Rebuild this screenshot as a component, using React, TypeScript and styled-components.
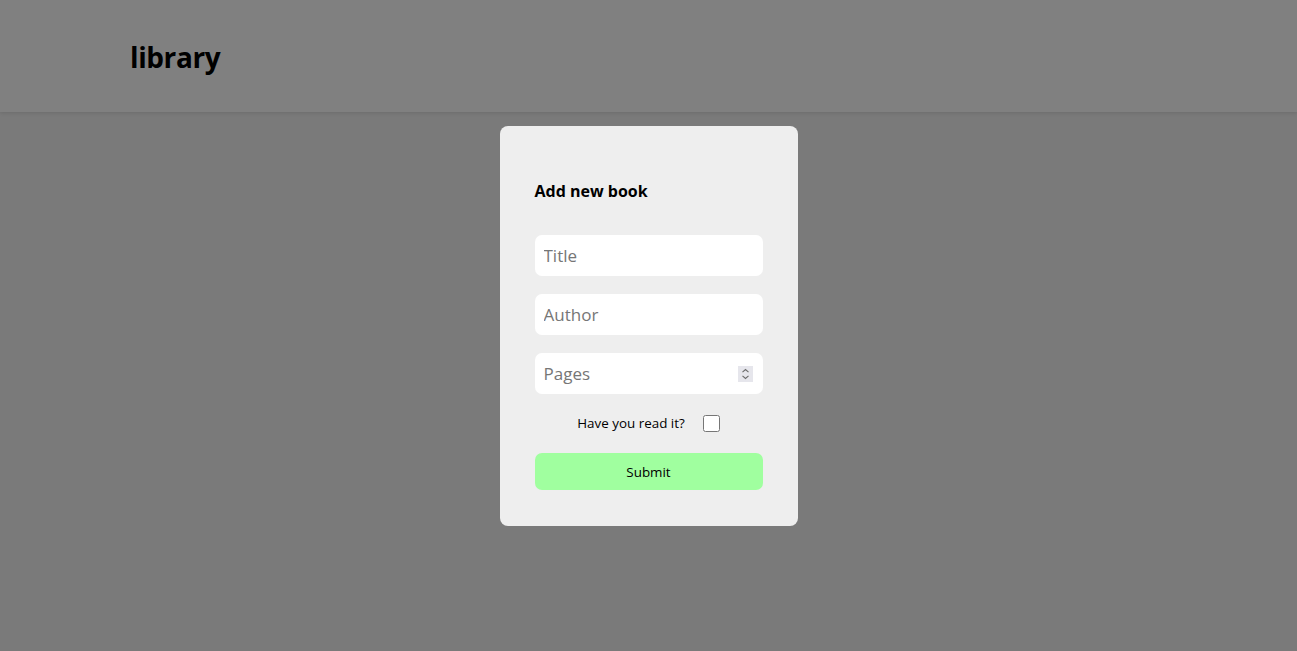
import React from "react";
import styled, { createGlobalStyle } from "styled-components";

const Global = createGlobalStyle`
  html, body { margin: 0; padding: 0; }
  body {
    background: #7a7a7a;
    font-family: "Open Sans", "Noto Sans", sans-serif;
    min-height: 651px;
  }
  * { box-sizing: border-box; }
`;

const Header = styled.header`
  height: 112px;
  background: #808080;
  box-shadow: 0 1px 4px rgba(0, 0, 0, 0.12);
  display: flex;
  align-items: center;
  padding-left: 130px;
  position: relative;
  z-index: 1;
`;

const Logo = styled.h1`
  margin: 0;
  font-size: 28px;
  font-weight: 700;
  color: #000;
  letter-spacing: -0.4px;
  padding-top: 2px;
`;

const Main = styled.main`
  display: flex;
  justify-content: center;
  padding-top: 14px;
`;

const Card = styled.form`
  width: 298px;
  height: 400px;
  background: #eeeeee;
  border-radius: 8px;
  padding: 53px 35px 0;
  display: flex;
  flex-direction: column;
`;

const Title = styled.h2`
  margin: 0 0 32px;
  font-size: 16px;
  font-weight: 700;
  color: #000;
  line-height: 24px;
`;

const FieldWrap = styled.div`
  position: relative;
  width: 228px;
  height: 41px;
  margin-bottom: 18px;
`;

const Field = styled.input`
  width: 100%;
  height: 100%;
  border: none;
  border-radius: 7px;
  background: #fff;
  padding: 0 9px;
  font-family: inherit;
  font-size: 17px;
  color: #000;
  outline: none;
  -moz-appearance: textfield;
  &::placeholder { color: #767676; }
  &::-webkit-inner-spin-button,
  &::-webkit-outer-spin-button { -webkit-appearance: none; margin: 0; }
`;

const Spinner = styled.span`
  position: absolute;
  right: 10px;
  top: 13px;
  width: 15px;
  height: 16px;
  background: #e6e6ec;
  display: flex;
  align-items: center;
  justify-content: center;
  pointer-events: none;
`;

const CheckRow = styled.label`
  display: flex;
  justify-content: center;
  align-items: center;
  gap: 18px;
  font-size: 13.4px;
  color: #000;
  margin-top: -9px;
  height: 40px;
  margin-bottom: 10px;
`;

const Box = styled.input`
  width: 17px;
  height: 17px;
  margin: 0;
`;

const Submit = styled.button`
  width: 228px;
  height: 37px;
  border: none;
  border-radius: 7px;
  background: #a0ff9f;
  font-family: inherit;
  font-size: 13.4px;
  color: #000;
`;

export default function App() {
  return (
    <>
      <Global />
      <Header>
        <Logo>library</Logo>
      </Header>
      <Main>
        <Card onSubmit={(e) => e.preventDefault()}>
          <Title>Add new book</Title>
          <FieldWrap>
            <Field type="text" placeholder="Title" />
          </FieldWrap>
          <FieldWrap>
            <Field type="text" placeholder="Author" />
          </FieldWrap>
          <FieldWrap>
            <Field type="number" placeholder="Pages" />
            <Spinner>
              <svg width="9" height="12" viewBox="0 0 9 12" fill="none" stroke="#6b6b6b" strokeWidth="1.1">
                <path d="M1.5 4.2 L4.5 1.5 L7.5 4.2" />
                <path d="M1.5 7.8 L4.5 10.5 L7.5 7.8" />
              </svg>
            </Spinner>
          </FieldWrap>
          <CheckRow>
            Have you read it?
            <Box type="checkbox" />
          </CheckRow>
          <Submit type="submit">Submit</Submit>
        </Card>
      </Main>
    </>
  );
}
